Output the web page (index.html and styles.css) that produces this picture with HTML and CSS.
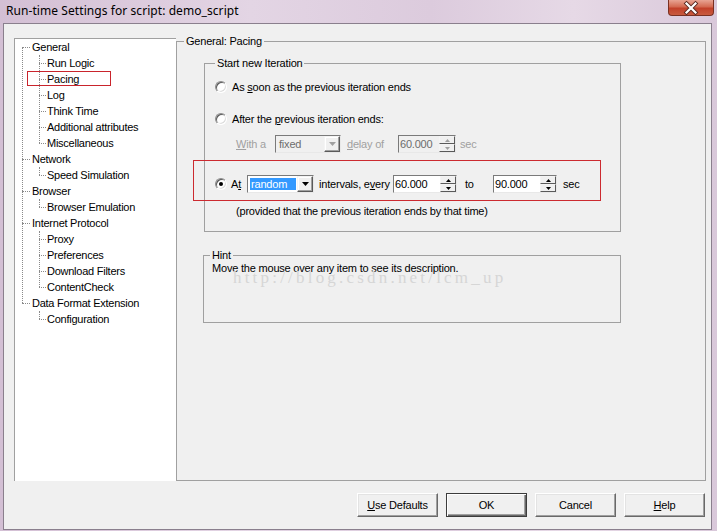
FILE: index.html
```html
<!DOCTYPE html>
<html>
<head>
<meta charset="utf-8">
<title>Run-time Settings</title>
<link rel="stylesheet" href="styles.css">
</head>
<body>
<div class="window">
  <div class="titlebar">
    <span class="title">Run-time Settings for script: demo_script</span>
    <span class="close">
      <svg width="46" height="16" viewBox="0 0 46 16">
        <path d="M18.5 3.5 L27.5 12.5 M27.5 3.5 L18.5 12.5" stroke="#5a2a22" stroke-width="4" stroke-linecap="square"/>
        <path d="M18.5 3.5 L27.5 12.5 M27.5 3.5 L18.5 12.5" stroke="#ffffff" stroke-width="2.2" stroke-linecap="square"/>
      </svg>
    </span>
  </div>
  <div class="client">
    <div class="main">
      <div class="tree">
        <ul class="tree-root">
          <li><span class="node">General</span>
            <ul class="sub">
              <li><span class="node">Run Logic</span></li>
              <li><span class="node">Pacing<span class="mark"></span></span></li>
              <li><span class="node">Log</span></li>
              <li><span class="node">Think Time</span></li>
              <li><span class="node">Additional attributes</span></li>
              <li><span class="node">Miscellaneous</span></li>
            </ul>
          </li>
          <li><span class="node">Network</span>
            <ul class="sub">
              <li><span class="node">Speed Simulation</span></li>
            </ul>
          </li>
          <li><span class="node">Browser</span>
            <ul class="sub">
              <li><span class="node">Browser Emulation</span></li>
            </ul>
          </li>
          <li><span class="node">Internet Protocol</span>
            <ul class="sub">
              <li><span class="node">Proxy</span></li>
              <li><span class="node">Preferences</span></li>
              <li><span class="node">Download Filters</span></li>
              <li><span class="node">ContentCheck</span></li>
            </ul>
          </li>
          <li><span class="node">Data Format Extension</span>
            <ul class="sub">
              <li><span class="node">Configuration</span></li>
            </ul>
          </li>
        </ul>
      </div>

      <div class="group page">
        <div class="group-title page-title">General: Pacing</div>

        <div class="group iter">
          <div class="group-title iter-title">Start new Iteration</div>

          <div class="opt opt1">
            <span class="radio"></span>
            <span class="lbl">As <u>s</u>oon as the previous iteration ends</span>
          </div>

          <div class="opt opt2">
            <span class="radio"></span>
            <span class="lbl">After the <u>p</u>revious iteration ends:</span>
          </div>

          <div class="line fixed-line disabled">
            <span class="w-with"><u>W</u>ith a</span>
            <span class="combo combo-fixed">
              <span class="combo-text">fixed</span>
              <span class="combo-btn"><svg width="7" height="4" viewBox="0 0 7 4"><path d="M0 0H7L3.5 4Z" fill="#a0a0a0"/></svg></span>
            </span>
            <span class="w-delay"><u>d</u>elay of</span>
            <span class="spin spin-dis">
              <span class="spin-val">60.000</span>
              <span class="spin-btns">
                <span class="sb"><svg width="5" height="3" viewBox="0 0 5 3"><path d="M2.5 0L5 3H0Z" fill="#a0a0a0"/></svg></span>
                <span class="sb"><svg width="5" height="3" viewBox="0 0 5 3"><path d="M0 0H5L2.5 3Z" fill="#a0a0a0"/></svg></span>
              </span>
            </span>
            <span class="w-sec1">sec</span>
          </div>

          <div class="highlight">
            <div class="line at-line">
              <span class="radio checked"></span>
              <span class="w-at">A<u>t</u></span>
              <span class="combo combo-random">
                <span class="combo-sel">random</span>
                <span class="combo-btn"><svg width="7" height="4" viewBox="0 0 7 4"><path d="M0 0H7L3.5 4Z" fill="#000"/></svg></span>
              </span>
              <span class="w-every">intervals, e<u>v</u>ery</span>
              <span class="spin spin-a">
                <span class="spin-val">60.000</span>
                <span class="spin-btns">
                  <span class="sb"><svg width="5" height="3" viewBox="0 0 5 3"><path d="M2.5 0L5 3H0Z" fill="#000"/></svg></span>
                  <span class="sb"><svg width="5" height="3" viewBox="0 0 5 3"><path d="M0 0H5L2.5 3Z" fill="#000"/></svg></span>
                </span>
              </span>
              <span class="w-to">to</span>
              <span class="spin spin-b">
                <span class="spin-val">90.000</span>
                <span class="spin-btns">
                  <span class="sb"><svg width="5" height="3" viewBox="0 0 5 3"><path d="M2.5 0L5 3H0Z" fill="#000"/></svg></span>
                  <span class="sb"><svg width="5" height="3" viewBox="0 0 5 3"><path d="M0 0H5L2.5 3Z" fill="#000"/></svg></span>
                </span>
              </span>
              <span class="w-sec2">sec</span>
            </div>
          </div>

          <div class="provided">(provided that the previous iteration ends by that time)</div>
        </div>

        <div class="group hint">
          <div class="group-title hint-title">Hint</div>
          <div class="hint-text">Move the mouse over any item to see its description.</div>
          <div class="watermark">http://blog.csdn.net/lcm_up</div>
        </div>
      </div>
    </div>

    <div class="buttons">
      <span class="btn"><span><u>U</u>se Defaults</span></span>
      <span class="btn btn-default"><span>OK</span></span>
      <span class="btn"><span>Cancel</span></span>
      <span class="btn"><span><u>H</u>elp</span></span>
    </div>
  </div>
</div>
</body>
</html>
```

FILE: styles.css
```css
html, body {
  margin: 0;
  padding: 0;
}

body {
  width: 717px;
  height: 531px;
  overflow: hidden;
  background: #d8c7d9;
  font-family: "Liberation Sans", Arial, sans-serif;
  font-size: 11px;
  color: #000;
}

u {
  text-decoration: underline;
  text-underline-offset: 1px;
}

.window {
  width: 717px;
  height: 531px;
  display: flex;
  flex-direction: column;
  background: linear-gradient(90deg, #d3bfd4 0%, #e3d5e4 35%, #dccbdd 60%, #e6d9e6 80%, #d9c8da 100%);
}

/* ---------- title bar ---------- */
.titlebar {
  height: 23px;
  display: flex;
  align-items: flex-start;
  flex: none;
}

.title {
  font-family: "Noto Sans", "Liberation Sans", sans-serif;
  font-size: 12px;
  line-height: 15px;
  margin: 3px 0 0 6px;
  color: #000;
  letter-spacing: 0.07px;
}

.close {
  margin-left: auto;
  margin-right: 3px;
  width: 46px;
  height: 16px;
  box-sizing: border-box;
  border: 1px solid #7a3022;
  border-top: none;
  border-radius: 0 0 4px 4px;
  background: linear-gradient(180deg, #e8a493 0%, #d46a52 45%, #c2412a 55%, #c85a3e 100%);
  display: flex;
  align-items: center;
  justify-content: center;
  overflow: hidden;
}

.close svg {
  display: block;
  flex: none;
}

/* ---------- client area ---------- */
.client {
  width: 709px;
  height: 507px;
  box-sizing: border-box;
  margin-left: 3px;
  border: 1px solid #8a7f8d;
  background: #f0f0f0;
  padding: 14px 0 0 10px;
}

.main {
  display: flex;
  align-items: flex-start;
}

/* ---------- tree ---------- */
.tree {
  width: 162px;
  height: 443px;
  box-sizing: border-box;
  background: #fff;
  border-top: 1px solid #a0a0a0;
  border-left: 1px solid #a0a0a0;
  flex: none;
}

.tree ul {
  list-style: none;
  margin: 0;
  padding: 0;
}

.tree-root {
  position: relative;
}

.tree-root::before {
  content: "";
  position: absolute;
  left: 7px;
  top: 8px;
  bottom: 24px;
  border-left: 1px dotted #8a8a8a;
}

.sub {
  position: relative;
}

.sub::before {
  content: "";
  position: absolute;
  left: 24px;
  top: 0;
  bottom: 8px;
  border-left: 1px dotted #8a8a8a;
}

.node {
  display: block;
  position: relative;
  height: 16px;
  line-height: 16px;
  padding-left: 17px;
  white-space: nowrap;
  letter-spacing: -0.25px;
}

.node::before {
  content: "";
  position: absolute;
  left: 7px;
  top: 8px;
  width: 8px;
  border-top: 1px dotted #8a8a8a;
}

.sub .node {
  padding-left: 32px;
}

.sub .node::before {
  left: 24px;
  width: 7px;
}

.mark {
  position: absolute;
  left: 12px;
  top: 0;
  width: 84px;
  height: 15px;
  box-sizing: border-box;
  border: 1px solid #c9242c;
}

/* ---------- group boxes ---------- */
.group {
  box-sizing: border-box;
  border: 1px solid #a0a0a0;
}

.group-title {
  width: fit-content;
  background: #f0f0f0;
  padding: 0 2px;
  line-height: 13px;
  height: 13px;
  margin-top: -7px;
  white-space: nowrap;
  letter-spacing: -0.2px;
}

.page {
  width: 530px;
  height: 440px;
  margin-top: 3px;
  flex: none;
}

.page-title {
  margin-left: 7px;
}

.iter {
  width: 417px;
  margin: 15px 0 0 27px;
  padding: 0 0 13px 10px;
}

.iter-title {
  margin-left: 0px;
}

.opt {
  display: flex;
  align-items: center;
  height: 16px;
  letter-spacing: -0.2px;
}

.opt1 {
  margin-top: 9px;
}

.opt2 {
  margin-top: 16px;
}

.radio {
  width: 12px;
  height: 12px;
  box-sizing: border-box;
  border-radius: 50%;
  border: 1px solid;
  border-color: #8c8c8c #ffffff #ffffff #8c8c8c;
  box-shadow: inset 1px 1px 0 #5a5a5a, inset -1px -1px 0 #dcdcdc;
  background: #fff;
  flex: none;
  display: flex;
  align-items: center;
  justify-content: center;
}

.radio.checked::after {
  content: "";
  width: 4px;
  height: 4px;
  border-radius: 50%;
  background: #000;
}

.lbl {
  margin-left: 5px;
  white-space: nowrap;
}

.line {
  display: flex;
  align-items: center;
  height: 18px;
  white-space: nowrap;
  letter-spacing: -0.2px;
}

.fixed-line {
  margin-top: 8px;
  padding-left: 21px;
}

.disabled {
  color: #a0a0a0;
}

.w-with {
  width: 39px;
  flex: none;
}

.w-delay {
  width: 51px;
  margin-left: 6px;
  flex: none;
}

.w-sec1 {
  margin-left: 4px;
}

/* combo boxes */
.combo {
  display: flex;
  height: 18px;
  box-sizing: border-box;
  border: 1px solid;
  border-color: #7a7a7a #e8e8e8 #e8e8e8 #7a7a7a;
  background: #fff;
  flex: none;
}

.combo-fixed {
  width: 66px;
  background: #f0f0f0;
}

.combo-random {
  width: 67px;
}

.combo-text {
  flex: 1;
  padding-left: 3px;
  line-height: 16px;
  color: #6d6d6d;
}

.combo-sel {
  flex: 1;
  margin: 2px 1px 2px 2px;
  background: #3399ff;
  color: #fff;
  line-height: 12px;
  padding-left: 1px;
}

.combo-btn {
  width: 16px;
  height: 16px;
  box-sizing: border-box;
  border: 1px solid;
  border-color: #f4f4f4 #5a5a5a #5a5a5a #f4f4f4;
  box-shadow: inset -1px -1px 0 #a0a0a0, inset 1px 1px 0 #ffffff;
  background: #f0f0f0;
  display: flex;
  align-items: center;
  justify-content: center;
  flex: none;
}

.combo-btn svg,
.sb svg {
  display: block;
}

/* spinners */
.spin {
  display: flex;
  height: 18px;
  box-sizing: border-box;
  border: 1px solid;
  border-color: #7a7a7a #e8e8e8 #e8e8e8 #7a7a7a;
  background: #fff;
  flex: none;
}

.spin-dis {
  width: 58px;
  background: #f0f0f0;
}

.spin-dis .spin-val {
  color: #6d6d6d;
}

.spin-a,
.spin-b {
  width: 64px;
}

.spin-val {
  flex: 1;
  padding-left: 1px;
  line-height: 16px;
  color: #000;
}

.spin-btns {
  width: 16px;
  display: flex;
  flex-direction: column;
  flex: none;
}

.sb {
  height: 8px;
  box-sizing: border-box;
  border: 1px solid;
  border-color: #f4f4f4 #5a5a5a #5a5a5a #f4f4f4;
  background: #f0f0f0;
  display: flex;
  align-items: center;
  justify-content: center;
}

/* highlighted row */
.highlight {
  width: 408px;
  height: 41px;
  box-sizing: border-box;
  margin: 7px 0 0 -22px;
  border: 1px solid #cc2a30;
  padding: 14px 0 0 21px;
}

.w-at {
  width: 16px;
  margin-left: 4px;
  flex: none;
}

.w-every {
  width: 74px;
  margin-left: 5px;
  flex: none;
}

.w-to {
  width: 28px;
  margin-left: 8px;
  flex: none;
}

.w-sec2 {
  margin-left: 6px;
}

.provided {
  margin-top: 3px;
  padding-left: 21px;
  line-height: 14px;
  height: 14px;
  white-space: nowrap;
  letter-spacing: -0.2px;
}

/* hint */
.hint {
  position: relative;
  width: 418px;
  height: 68px;
  margin: 23px 0 0 26px;
}

.hint-title {
  margin-left: 6px;
}

.hint-text {
  margin-left: 8px;
  line-height: 13px;
  white-space: nowrap;
  letter-spacing: -0.2px;
}

.watermark {
  position: absolute;
  left: 29px;
  top: 16px;
  font-family: "Liberation Serif", serif;
  font-size: 17px;
  line-height: 12px;
  letter-spacing: 3.2px;
  color: #d6d6d6;
  white-space: nowrap;
}

/* buttons */
.buttons {
  display: flex;
  justify-content: flex-end;
  gap: 8px;
  margin-top: 12px;
  padding-right: 6px;
}

.btn {
  width: 81px;
  height: 24px;
  box-sizing: border-box;
  border: 1px solid;
  border-color: #ffffff #696969 #696969 #ffffff;
  box-shadow: inset -1px -1px 0 #a0a0a0, inset 1px 1px 0 #e3e3e3;
  background: #f0f0f0;
  display: flex;
  align-items: center;
  justify-content: center;
  letter-spacing: -0.2px;
}

.btn-default {
  border-color: #3c3c3c;
  box-shadow: inset 1px 1px 0 #ffffff, inset -1px -1px 0 #696969, inset -2px -2px 0 #a0a0a0;
}
```
